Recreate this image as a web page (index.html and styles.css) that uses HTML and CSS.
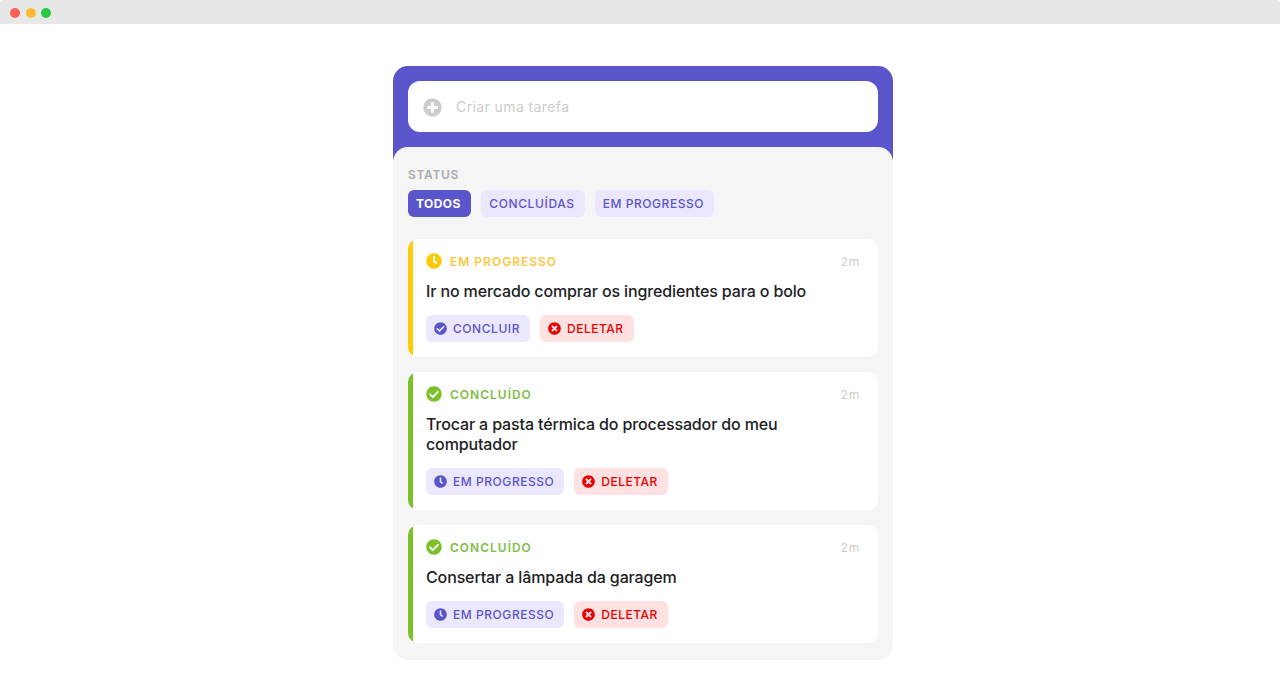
FILE: index.html
```html
<!DOCTYPE html>
<html lang="pt-BR">
<head>
<meta charset="utf-8">
<title>Tarefas</title>
<link rel="stylesheet" href="styles.css">
</head>
<body>
<svg class="sprite" aria-hidden="true">
  <symbol id="plus" viewBox="0 0 512 512"><path d="M256 8a248 248 0 1 0 0 496a248 248 0 1 0 0-496zm144 276c0 6.600-5.400 12-12 12h-92v92c0 6.600-5.400 12-12 12h-56c-6.600 0-12-5.400-12-12v-92h-92c-6.600 0-12-5.400-12-12v-56c0-6.600 5.400-12 12-12h92v-92c0-6.600 5.400-12 12-12h56c6.600 0 12 5.400 12 12v92h92c6.600 0 12 5.400 12 12v56z"/></symbol>
  <symbol id="check" viewBox="0 0 512 512"><path d="M504 256c0 137-111 248-248 248S8 393 8 256 119 8 256 8s248 111 248 248zM227.300 387.300l184-184c6.200-6.200 6.200-16.400 0-22.600l-22.600-22.600c-6.200-6.200-16.400-6.200-22.600 0L216 308.100l-70.100-70.100c-6.200-6.200-16.400-6.200-22.600 0l-22.600 22.600c-6.200 6.200-6.200 16.400 0 22.600l104 104c6.200 6.200 16.400 6.200 22.600 0z"/></symbol>
  <symbol id="clock" viewBox="0 0 512 512"><path d="M256 8C119 8 8 119 8 256s111 248 248 248 248-111 248-248S393 8 256 8zm92.500 313l-20 25a16 16 0 0 1-22.500 2.500l-67-49.700a40 40 0 0 1-15-31.200V112a16 16 0 0 1 16-16h32a16 16 0 0 1 16 16v144l58 42.500a16 16 0 0 1 2.500 22.500z"/></symbol>
  <symbol id="times" viewBox="0 0 512 512"><path d="M256 8C119 8 8 119 8 256s111 248 248 248 248-111 248-248S393 8 256 8zm121.600 313.100c4.700 4.700 4.700 12.300 0 17L338 377.600c-4.700 4.700-12.300 4.700-17 0L256 312l-65.100 65.600c-4.700 4.700-12.300 4.700-17 0L134.400 338c-4.700-4.700-4.700-12.300 0-17l65.600-65-65.600-65.100c-4.700-4.700-4.700-12.300 0-17l39.600-39.600c4.700-4.700 12.300-4.700 17 0l65 65.700 65.100-65.600c4.700-4.700 12.300-4.700 17 0l39.600 39.600c4.700 4.700 4.700 12.300 0 17L312 256l65.600 65.100z"/></symbol>
</svg>
<div class="window">
  <div class="titlebar"><i class="dot close"></i><i class="dot minimize"></i><i class="dot maximize"></i></div>
  <main class="app">
    <header class="app-header">
      <label class="new-task"><svg class="icon"><use href="#plus"/></svg><input class="new-task-input" type="text" placeholder="Criar uma tarefa"></label>
    </header>
    <section class="panel">
      <h2 class="label">STATUS</h2>
      <nav class="filters">
        <button class="chip active">TODOS</button>
        <button class="chip completed">CONCLUÍDAS</button>
        <button class="chip">EM PROGRESSO</button>
      </nav>
      <div class="tasks">
        <article class="task progress">
          <div class="task-head"><svg class="icon"><use href="#clock"/></svg><span class="state">EM PROGRESSO</span><time class="age">2m</time></div>
          <p class="title">Ir no mercado comprar os ingredientes para o bolo</p>
          <div class="actions">
            <button class="chip"><svg class="icon"><use href="#check"/></svg>CONCLUIR</button>
            <button class="chip danger"><svg class="icon"><use href="#times"/></svg>DELETAR</button>
          </div>
        </article>
        <article class="task done">
          <div class="task-head"><svg class="icon"><use href="#check"/></svg><span class="state">CONCLUÍDO</span><time class="age">2m</time></div>
          <p class="title">Trocar a pasta térmica do processador do meu computador</p>
          <div class="actions">
            <button class="chip"><svg class="icon"><use href="#clock"/></svg>EM PROGRESSO</button>
            <button class="chip danger"><svg class="icon"><use href="#times"/></svg>DELETAR</button>
          </div>
        </article>
        <article class="task done">
          <div class="task-head"><svg class="icon"><use href="#check"/></svg><span class="state">CONCLUÍDO</span><time class="age">2m</time></div>
          <p class="title">Consertar a lâmpada da garagem</p>
          <div class="actions">
            <button class="chip"><svg class="icon"><use href="#clock"/></svg>EM PROGRESSO</button>
            <button class="chip danger"><svg class="icon"><use href="#times"/></svg>DELETAR</button>
          </div>
        </article>
      </div>
    </section>
  </main>
</div>
</body>
</html>
```
FILE: styles.css
```css
* { box-sizing: border-box; margin: 0; padding: 0; }
body { background: #fff; font-family: Inter, sans-serif; overflow: hidden; }
button, input { font-family: inherit; border: 0; outline: 0; }
.sprite { display: none; }
.icon { display: block; flex: none; fill: currentColor; }
.window { height: 699px; }
.titlebar { display: flex; align-items: center; gap: 5.500px; height: 24px; padding: 2px 0 0 10.400px; background: #e7e7e7; border-radius: 3px 3px 0 0; }
.dot { width: 10px; height: 10px; border-radius: 50%; }
.close { background: #ff5f57; }
.minimize { background: #febc2e; }
.maximize { background: #28c840; }
.app { width: 500px; margin: 42px 0 0 393px; }
.app-header { height: 94px; padding: 15px; background: #5b55cb; border-radius: 15px 15px 0 0; }
.new-task { display: flex; align-items: center; gap: 14px; height: 51px; padding: 0 15px; background: #fff; border-radius: 12px; color: #ccc; }
.new-task .icon { width: 19px; height: 19px; margin-top: 1px; }
.new-task-input { flex: 1; background: transparent; font-size: 14px; letter-spacing: .4px; }
.new-task-input::placeholder { color: #ccc; opacity: 1; }
.panel { height: 513px; margin-top: -13px; padding: 20px 15px 17px; background: #f5f5f5; border-radius: 15px; }
.label { height: 23px; color: #aaa; font-size: 12px; font-weight: 600; line-height: 16px; letter-spacing: .68px; }
.filters, .actions { display: flex; gap: 10px; }
.chip { display: flex; align-items: center; height: 27px; padding: 0 10px 0 8px; border-radius: 6px; background: #eae7ff; color: #5b55cb; font-size: 12px; font-weight: 500; letter-spacing: .55px; white-space: nowrap; }
.chip.active { background: #5b55cb; color: #fff; font-weight: 700; letter-spacing: .42px; }
.chip.completed { padding-left: 8.500px; letter-spacing: .62px; }
.chip.danger { background: #ffe1e1; color: #e60000; letter-spacing: .5px; }
.chip .icon { width: 13px; height: 13px; margin-right: 6px; }
.tasks { display: grid; gap: 15px; margin-top: 22px; }
.task { padding: 14px 18px 15px; border-radius: 10px; background: linear-gradient(to right, var(--accent) 5px, #fff 5px); }
.progress { --accent: #fccb05; }
.done { --accent: #7bc12a; }
.task-head { display: flex; align-items: center; height: 16px; color: var(--accent); font-size: 12px; letter-spacing: 1px; }
.task-head .icon { width: 16px; height: 16px; }
.state { margin-left: 8px; color: #fbc740; font-weight: 600; letter-spacing: 1px; }
.done .state { color: #80bd48; }
.age { margin-left: auto; color: #ccc; letter-spacing: .7px; }
.title { max-width: 400px; margin: 12px 0 14px; color: #202124; font-size: 16px; font-weight: 500; line-height: 20px; letter-spacing: -.13px; }
```
